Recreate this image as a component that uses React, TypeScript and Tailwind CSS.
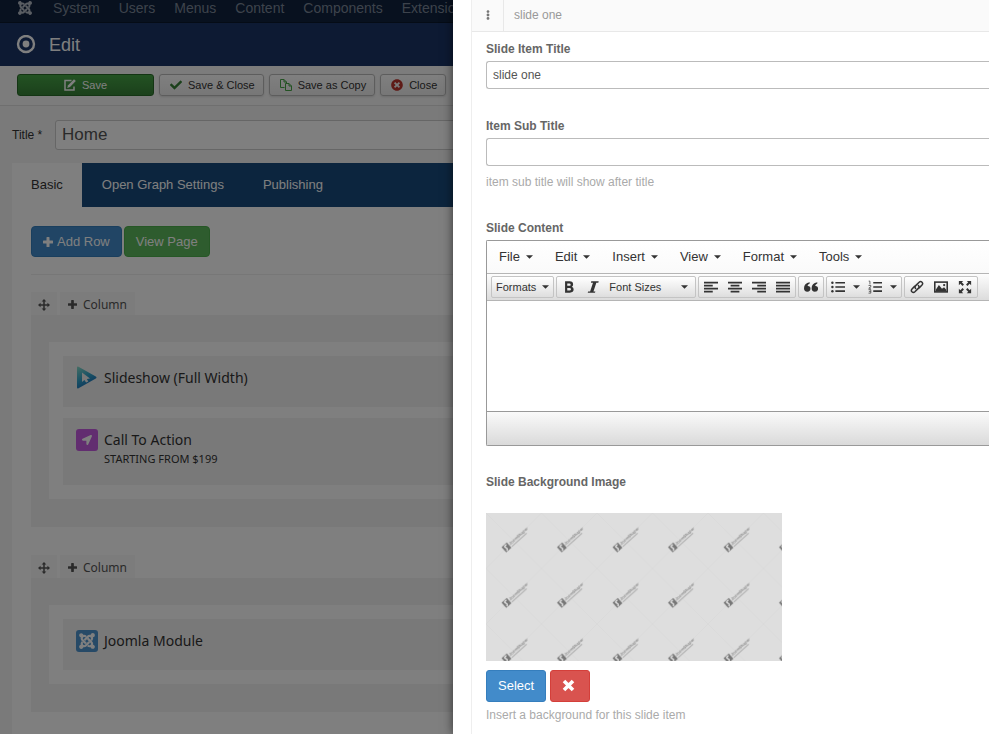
import type { ReactNode } from "react";
import { FaCheck, FaEllipsisV, FaJoomla, FaLocationArrow, FaTimesCircle } from "react-icons/fa";

const navLinks = ["System", "Users", "Menus", "Content", "Components", "Extensions", "Help"];
const menus = ["File", "Edit", "Insert", "View", "Format", "Tools"];

function Caret() {
  return (
    <svg width="7" height="4" viewBox="0 0 8 4" aria-hidden="true" className="shrink-0">
      <path d="M0 0h8L4 4z" fill="#333" />
    </svg>
  );
}

function PlusIcon({ size }: { size: number }) {
  return (
    <svg width={size} height={size} viewBox="0 0 10 10" fill="currentColor" aria-hidden="true" className="shrink-0">
      <path d="M3.5.5Q3.5 0 4 0h2q.5 0 .5.5v3h3q.5 0 .5.5v2q0 .5-.5.5h-3v3q0 .5-.5.5H4q-.5 0-.5-.5v-3h-3Q0 6.500 0 6V4q0-.5.5-.5h3Z" />
    </svg>
  );
}

function MoveIcon() {
  return (
    <svg width="12" height="12" viewBox="0 0 14 14" fill="currentColor" aria-hidden="true">
      <path d="M7 0 9.700 3H7.900v3.100H11V4.300L14 7l-3 2.700V7.900H7.900V11h1.800L7 14l-2.700-3h1.800V7.900H3v1.800L0 7l3-2.700v1.800h3.100V3H4.300Z" />
    </svg>
  );
}

function EditIcon() {
  return (
    <svg width="12" height="12" viewBox="0 0 12 12" aria-hidden="true">
      <path d="M7.500 1.500H1V11h9V7.500" fill="none" stroke="#fff" strokeWidth="1.500" />
      <path d="M10 .2 11.800 2 6 8l-2.800 1 .9-2.800Z" fill="#fff" />
    </svg>
  );
}

function CopyIcon() {
  return (
    <svg width="12" height="12" viewBox="0 0 12 12" fill="none" stroke="#46a546" aria-hidden="true">
      <path d="M4.500 8.500h-4v-8H4L6.500 3v1M4 .5V3h2.500" />
      <path d="M5.500 4.500H9L11.500 7v4.500h-6ZM9 4.500V7h2.500" />
    </svg>
  );
}

function ToolbarButton({ icon, label }: { icon: ReactNode; label: string }) {
  return (
    <button
      type="button"
      className="flex h-[22px] items-center gap-1 rounded-[3px] border border-[#bbb] bg-gradient-to-b from-white to-[#eee] px-2 text-[11px] leading-4 text-[#333] shadow-sm"
    >
      <span className="flex w-4 justify-center">{icon}</span>
      {label}
    </button>
  );
}

function RowSection({ children }: { children: ReactNode }) {
  return (
    <section className="mb-7">
      <div className="flex h-[23px] gap-[3px] text-xs text-[#555]">
        <button
          type="button"
          aria-label="Move row"
          className="flex w-[26px] items-center justify-center bg-[#f8f8f8] pt-[2px]"
        >
          <MoveIcon />
        </button>
        <button
          type="button"
          className="flex items-center gap-[6px] bg-[#f8f8f8] px-2 pt-[2px] font-['Noto_Sans',sans-serif]"
        >
          <PlusIcon size={9} />
          Column
        </button>
      </div>
      <div className="bg-[#f2f2f2] pt-[27px] pb-7 pl-[18px]">
        <div className="flex flex-col gap-[11px] bg-white py-[14px] pl-[14px]">{children}</div>
      </div>
    </section>
  );
}

function Addon({ icon, title, note }: { icon: ReactNode; title: string; note?: string }) {
  return (
    <article className="flex gap-[6px] bg-[#f2f2f2] px-3 pt-[10px] pb-[18px] font-['Noto_Sans',sans-serif] text-[#333]">
      <span className="flex h-[23px] w-[23px] shrink-0 items-center justify-center">{icon}</span>
      <div>
        <h3 className="text-sm leading-[23px]">{title}</h3>
        {note && <p className="text-[11px] leading-4">{note}</p>}
      </div>
    </article>
  );
}

function SlideshowIcon() {
  return (
    <svg width="21" height="23" viewBox="0 0 21 23" aria-hidden="true">
      <defs>
        <linearGradient id="play" x1="0" y1="0" x2="0.5" y2="1">
          <stop offset="0" stopColor="#8adcc8" />
          <stop offset="0.55" stopColor="#32a4cb" />
          <stop offset="1" stopColor="#1768b8" />
        </linearGradient>
      </defs>
      <path
        fillRule="evenodd"
        fill="url(#play)"
        d="M2.500.8 19.800 10.600q1.400.9 0 1.800L2.500 22.300Q1 23 1 21.300V1.800Q1 .1 2.500.8ZM6 6.500v9.500l2.400-2 1.700 2.400 2.200-.8-1.500-2.600 3.200-.5Z"
      />
    </svg>
  );
}

function Glyph({ children }: { children: ReactNode }) {
  return (
    <svg width="14" height="14" viewBox="0 0 16 16" fill="#333" aria-hidden="true" className="shrink-0">
      {children}
    </svg>
  );
}

function Tool({ label, wide, children }: { label: string; wide?: boolean; children: ReactNode }) {
  return (
    <button
      type="button"
      aria-label={label}
      className={`flex h-5 items-center justify-center ${wide ? "w-[37px] gap-2" : "w-6"}`}
    >
      {children}
      {wide && <Caret />}
    </button>
  );
}

function ToolGroup({ children }: { children: ReactNode }) {
  return (
    <div className="flex h-[22px] shrink-0 items-center rounded-[2px] border border-[#c4c4c4] bg-gradient-to-b from-white to-[#dedede] text-[11px] text-[#333]">
      {children}
    </div>
  );
}

function Editor() {
  return (
    <div className="rounded-l-[2px] border border-r-0 border-[#999]">
      <div className="flex h-8 items-center gap-[22px] bg-gradient-to-b from-white to-[#fafafa] pl-3">
        {menus.map((menu) => (
          <button key={menu} type="button" className="flex items-center gap-[6px] text-[13px] leading-4 text-[#333]">
            {menu}
            <Caret />
          </button>
        ))}
      </div>
      <div className="flex h-7 items-center gap-[2px] border-y border-[#b5b5b5] bg-gradient-to-b from-[#fdfdfd] to-[#dcdcdc] pl-1">
        <ToolGroup>
          <button type="button" className="flex h-5 items-center gap-[6px] px-1">
            Formats
            <Caret />
          </button>
        </ToolGroup>
        <ToolGroup>
          <Tool label="Bold">
            <Glyph>
              <path
                fillRule="evenodd"
                d="M3.500 1.500h5.200q4 0 4 3.500 0 2-1.500 2.700 2.100.8 2.100 3 0 3.800-4.300 3.800H3.500ZM6 4v2.700h2.200q1.700 0 1.700-1.400T8.200 4ZM6 9v3h2.500q1.800 0 1.800-1.500T8.500 9Z"
              />
            </Glyph>
          </Tool>
          <Tool label="Italic">
            <Glyph>
              <path d="M6 1.500h8.500l-.4 1.500h-2.300L8.500 13h2.200l-.4 1.500H2l.4-1.500h2.300L8 3H5.600Z" />
            </Glyph>
          </Tool>
          <button type="button" className="flex h-5 w-[90px] items-center justify-between pr-[7px] pl-1">
            Font Sizes
            <Caret />
          </button>
        </ToolGroup>
        <ToolGroup>
          <Tool label="Align left">
            <Glyph>
              <path d="M0 2h16v2H0zM0 5.400h10v2H0zM0 8.800h16v2H0zM0 12.200h10v2H0z" />
            </Glyph>
          </Tool>
          <Tool label="Align center">
            <Glyph>
              <path d="M0 2h16v2H0zM3 5.400h10v2H3zM0 8.800h16v2H0zM3 12.200h10v2H3z" />
            </Glyph>
          </Tool>
          <Tool label="Align right">
            <Glyph>
              <path d="M0 2h16v2H0zM6 5.400h10v2H6zM0 8.800h16v2H0zM6 12.200h10v2H6z" />
            </Glyph>
          </Tool>
          <Tool label="Justify">
            <Glyph>
              <path d="M0 2h16v2H0zM0 5.400h16v2H0zM0 8.800h16v2H0zM0 12.200h16v2H0z" />
            </Glyph>
          </Tool>
        </ToolGroup>
        <ToolGroup>
          <Tool label="Blockquote">
            <Glyph>
              <path d="M6.500 2.500v1.400Q4.400 4.800 4 6.800q3.400-.3 3.400 3 0 3.600-3.600 3.600Q0 13.400 0 9.500 0 3.500 6.500 2.500ZM15.200 2.500v1.400q-2.100.9-2.500 2.900 3.400-.3 3.400 3 0 3.600-3.600 3.600-3.800 0-3.800-3.900 0-6 6.500-7Z" />
            </Glyph>
          </Tool>
        </ToolGroup>
        <ToolGroup>
          <Tool label="Bullet list" wide>
            <Glyph>
              <path d="M5 2.200h11v1.900H5zM5 7h11v1.900H5zM5 11.800h11v1.900H5z" />
              <circle cx="1.600" cy="3.200" r="1.400" />
              <circle cx="1.600" cy="8" r="1.400" />
              <circle cx="1.600" cy="12.800" r="1.400" />
            </Glyph>
          </Tool>
          <Tool label="Numbered list" wide>
            <Glyph>
              <path d="M6 2.200h10v1.900H6zM6 7h10v1.900H6zM6 11.800h10v1.900H6z" />
              <path
                d="M.8 1.300h1.400v3.600M.6 6.200h2.600v1.500L.9 9.400h2.500M.6 11h2.600v4H.6M1 13h2.200"
                fill="none"
                stroke="#444"
                strokeWidth="0.9"
              />
            </Glyph>
          </Tool>
        </ToolGroup>
        <ToolGroup>
          <Tool label="Insert link">
            <Glyph>
              <g fill="none" stroke="#333" strokeWidth="1.700" strokeLinecap="round">
                <path d="M6.400 9.800Q4.900 8 6.500 6.400L10.400 2.500Q12.100 1 13.800 2.500 15.200 4.100 13.700 5.800L10.800 8.700" />
                <path d="M9.600 6.200q1.500 1.800-.1 3.400l-3.900 3.900q-1.700 1.500-3.400 0-1.400-1.600.1-3.300l2.900-2.900" />
              </g>
            </Glyph>
          </Tool>
          <Tool label="Insert image">
            <Glyph>
              <rect x="0.900" y="2.400" width="14.200" height="11.200" fill="none" stroke="#333" strokeWidth="1.800" />
              <path d="M2 13V11l3.600-5.200 3.500 4.300 2.400-1.800L14 11v2Z" />
              <circle cx="11.600" cy="5.800" r="1.300" />
            </Glyph>
          </Tool>
          <Tool label="Fullscreen">
            <Glyph>
              <path d="M1 1h5L4.300 2.700l2.500 2.500-1.600 1.600-2.500-2.500L1 6ZM15 1v5l-1.700-1.700-2.500 2.500-1.600-1.600 2.500-2.500L10 1ZM1 15v-5l1.700 1.700 2.500-2.500 1.600 1.600-2.500 2.500L6 15ZM15 15h-5l1.700-1.700-2.500-2.500 1.600-1.600 2.500 2.500L15 10Z" />
            </Glyph>
          </Tool>
        </ToolGroup>
      </div>
      <textarea
        id="slide-content"
        className="block h-[110px] w-full resize-none bg-white p-2 text-xs text-[#555] outline-none"
      />
      <div className="h-[34px] border-t border-[#999] bg-gradient-to-b from-[#fafafa] to-[#dadada]" />
    </div>
  );
}

function BackgroundPreview() {
  return (
    <svg width="296" height="148" viewBox="0 0 296 148" role="img" aria-label="Background preview" className="block">
      <defs>
        <pattern id="tile" width="55.500" height="55.500" patternUnits="userSpaceOnUse">
          <rect width="56" height="56" fill="#dedede" />
          <path d="M0 0 55.500 55.500M55.500 0 0 55.500" stroke="#d9d9d9" strokeWidth="0.800" />
        </pattern>
        <pattern id="logo" width="55.500" height="55.500" patternUnits="userSpaceOnUse">
          <g transform="translate(20.500 34.500) rotate(-42)">
            <rect x="-3.500" y="-3.500" width="7" height="7" fill="#777" />
            <path d="M2-2.400Q-1.800-2.800-.6-.6T-2 2.600" stroke="#eee" strokeWidth="1.300" fill="none" />
            <text x="4.500" y="0.800" fontSize="4" fontWeight="bold" fontFamily="Liberation Sans, sans-serif" fill="#8a8a8a">
              JoomShaper
            </text>
            <path d="M4.500 2.900h20" stroke="#aaa" strokeWidth="1" />
          </g>
        </pattern>
      </defs>
      <rect width="296" height="148" fill="url(#tile)" />
      <rect width="296" height="148" fill="url(#logo)" />
    </svg>
  );
}

function Page() {
  return (
    <div className="min-h-full bg-[#f5f5f5]">
      <nav className="flex h-[23px] items-start gap-[19px] border-b border-[#0b182c] bg-[#10223e] pl-[17px] text-sm leading-4 text-[#7b8798]">
        <FaJoomla size={16} className="mr-px text-[#b5bcc6]" />
        {navLinks.map((link) => (
          <a key={link} href="#menu">
            {link}
          </a>
        ))}
      </nav>
      <header className="flex h-[43px] items-center gap-[13px] bg-[#1a3467] pl-4 text-white">
        <svg width="20" height="20" viewBox="0 0 20 20" aria-hidden="true">
          <circle cx="10" cy="9" r="8" fill="none" stroke="#fff" strokeWidth="2.400" />
          <circle cx="10" cy="9" r="3.400" fill="#fff" />
        </svg>
        <h1 className="text-lg">Edit</h1>
      </header>
      <div className="flex h-10 items-center gap-[5px] border-b border-[#dedede] bg-[#f9f9f9] pb-[2px] pl-[17px]">
        <button
          type="button"
          className="flex h-[22px] w-[137px] items-center justify-center gap-[6px] rounded-[3px] border border-[#296b29] bg-gradient-to-b from-[#46a546] to-[#378137] text-[11px] leading-4 text-white"
        >
          <EditIcon />
          Save
        </button>
        <ToolbarButton icon={<FaCheck size={12} className="text-[#378137]" />} label="Save & Close" />
        <ToolbarButton icon={<CopyIcon />} label="Save as Copy" />
        <ToolbarButton icon={<FaTimesCircle size={12} className="text-[#bd362f]" />} label="Close" />
      </div>
      <div className="mt-[14px] flex items-center pl-3 text-[#333]">
        <label htmlFor="page-title" className="w-[43px] text-xs">
          Title *
        </label>
        <input
          id="page-title"
          defaultValue="Home"
          className="h-[30px] flex-1 rounded-[3px] border border-[#ccc] bg-white px-[6px] text-[17px] text-[#555]"
        />
      </div>
      <main className="mt-[13px] ml-3 bg-white pb-10">
        <div className="flex h-11 bg-[#184a7d] text-[13px] text-white">
          <button type="button" className="bg-white px-[19px] text-[#333]">
            Basic
          </button>
          <button type="button" className="px-5">
            Open Graph Settings
          </button>
          <button type="button" className="px-[19px]">
            Publishing
          </button>
        </div>
        <div className="pt-[19px] pl-[19px]">
          <div className="flex gap-[2px] text-[13px] text-white">
            <button
              type="button"
              className="flex h-[31px] items-center gap-1 rounded-[4px] border border-[#357ebd] bg-[#428bca] px-[11px]"
            >
              <PlusIcon size={10} />
              Add Row
            </button>
            <button type="button" className="h-[31px] rounded-[4px] border border-[#4cae4c] bg-[#5cb85c] px-[11px]">
              View Page
            </button>
          </div>
          <hr className="my-[17px] border-[#eee]" />
          <RowSection>
            <Addon icon={<SlideshowIcon />} title="Slideshow (Full Width)" />
            <Addon
              icon={
                <span className="flex h-[22px] w-[22px] items-center justify-center rounded-[3px] bg-[#c45be0] text-white">
                  <FaLocationArrow size={10} />
                </span>
              }
              title="Call To Action"
              note="STARTING FROM $199"
            />
          </RowSection>
          <RowSection>
            <Addon
              icon={
                <span className="flex h-[22px] w-[22px] items-center justify-center rounded-[3px] bg-[#4f94cf] text-white">
                  <FaJoomla size={18} />
                </span>
              }
              title="Joomla Module"
            />
          </RowSection>
        </div>
      </main>
    </div>
  );
}

function SlidePanel() {
  return (
    <aside className="absolute inset-y-0 right-0 left-[453px] overflow-hidden bg-white pl-[18px] shadow-[0_0_10px_rgba(0,0,0,0.6)]">
      <div className="min-h-full border-l border-[#eee]">
        <div className="flex h-8 items-stretch border-b border-[#e8e8e8] bg-[#fafafa] text-xs text-[#999]">
          <button
            type="button"
            aria-label="Reorder slide"
            className="flex w-8 items-center justify-center border-r border-[#e8e8e8] pb-[2px] text-[#777]"
          >
            <FaEllipsisV size={10} />
          </button>
          <span className="flex items-center pb-[2px] pl-[10px]">slide one</span>
        </div>
        <form className="pt-[9px] pl-[14px] text-xs leading-4">
          <label htmlFor="item-title" className="block font-bold text-[#666]">
            Slide Item Title
          </label>
          <input
            id="item-title"
            defaultValue="slide one"
            className="mt-1 block h-7 w-full rounded-l-[3px] border border-r-0 border-[#bbb] px-[6px] text-[#555]"
          />
          <label htmlFor="item-sub-title" className="mt-[29px] block font-bold text-[#666]">
            Item Sub Title
          </label>
          <input
            id="item-sub-title"
            className="mt-1 block h-7 w-full rounded-l-[3px] border border-r-0 border-[#bbb] px-[6px] text-[#555]"
          />
          <p className="mt-2 text-[#aaa]">item sub title will show after title</p>
          <label htmlFor="slide-content" className="mt-[30px] mb-1 block font-bold text-[#666]">
            Slide Content
          </label>
          <Editor />
          <h2 className="mt-7 mb-[23px] font-bold text-[#666]">Slide Background Image</h2>
          <BackgroundPreview />
          <div className="mt-[9px] flex gap-1 text-[13px] text-white">
            <button type="button" className="h-8 rounded-[3px] border border-[#357ebd] bg-[#428bca] px-[11px]">
              Select
            </button>
            <button
              type="button"
              aria-label="Remove image"
              className="flex h-8 w-10 items-center justify-center rounded-[3px] border border-[#d43f3a] bg-[#d9534f] pr-1 pb-[2px]"
            >
              <svg width="13" height="13" viewBox="0 0 13 13" aria-hidden="true">
                <path d="M2 2l9 9M11 2l-9 9" stroke="#fff" strokeWidth="3.600" />
              </svg>
            </button>
          </div>
          <p className="mt-[5px] text-[#aaa]">Insert a background for this slide item</p>
        </form>
      </div>
    </aside>
  );
}

export default function App() {
  return (
    <div className="relative h-screen overflow-hidden font-['Liberation_Sans',Arial,sans-serif]">
      <Page />
      <div className="absolute inset-0 bg-black/50" />
      <SlidePanel />
    </div>
  );
}
